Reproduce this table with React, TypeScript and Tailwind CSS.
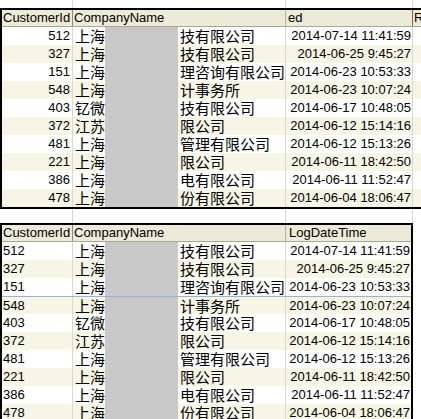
import React from "react";

const rows: [string, string, string, string][] = [
  ["512", "上海", "技有限公司", "2014-07-14 11:41:59"],
  ["327", "上海", "技有限公司", "2014-06-25 9:45:27"],
  ["151", "上海", "理咨询有限公司", "2014-06-23 10:53:33"],
  ["548", "上海", "计事务所", "2014-06-23 10:07:24"],
  ["403", "钇微", "技有限公司", "2014-06-17 10:48:05"],
  ["372", "江苏", "限公司", "2014-06-12 15:14:16"],
  ["481", "上海", "管理有限公司", "2014-06-12 15:13:26"],
  ["221", "上海", "限公司", "2014-06-11 18:42:50"],
  ["386", "上海", "电有限公司", "2014-06-11 11:52:47"],
  ["478", "上海", "份有限公司", "2014-06-04 18:06:47"],
];

const latin = { fontFamily: '"Liberation Sans", Arial, sans-serif' };
const cjk = { fontFamily: '"Noto Sans CJK SC", "Noto Sans", sans-serif' };

function GapLines({ h }: { h: string }) {
  return (
    <div className={`flex ${h} shrink-0`}>
      <div className="w-[73px] shrink-0 border-r border-[#d9d9d9]" />
      <div className="w-[213px] shrink-0 border-r border-[#d9d9d9]" />
      <div className="w-[127px] shrink-0 border-r border-[#d9d9d9]" />
    </div>
  );
}

function Table({ top }: { top: boolean }) {
  return (
    <div
      className={
        top
          ? "flex flex-col w-[440px] shrink-0 border-l-2 border-t-2 border-b-2 border-black"
          : "flex flex-col w-[413px] shrink-0 border-l-2 border-t-2 border-r-2 border-black"
      }
    >
      <div className="flex h-[17px] bg-[#ecead9] border-b border-[#a8a698] text-[13px] leading-[16px] text-black" style={latin}>
        <div className="w-[71px] shrink-0 border-r border-[#8c8a80] pl-[1px] overflow-hidden whitespace-nowrap">CustomerId</div>
        <div className="w-[213px] shrink-0 border-r border-[#b5b3a5] pl-[1px] overflow-hidden whitespace-nowrap">CompanyName</div>
        <div className={top ? "w-[127px] shrink-0 border-r border-[#6e6c64] pl-[2px] overflow-hidden whitespace-nowrap" : "w-[125px] shrink-0 pl-[3px] overflow-hidden whitespace-nowrap"}>
          {top ? "ed" : "LogDateTime"}
        </div>
        {top && <div className="flex-1 pl-[1px] overflow-hidden whitespace-nowrap">R</div>}
      </div>
      {rows.map((r, i) => {
        const bg = i % 2 === 1 ? "bg-[#f7f6e6]" : "bg-white";
        const blue = !top && i === 3 ? "border-t border-[#9fb3c8] h-[18px]" : "h-[18px]";
        return (
          <div key={i} className={`flex ${blue} ${bg} text-black`}>
            <div
              className={`w-[71px] shrink-0 border-r border-[#dcd9c8] text-[13px] leading-[18px] ${top ? "text-right pr-[2px]" : "text-left pl-[1px]"}`}
              style={latin}
            >
              {r[0]}
            </div>
            <div className="w-[213px] shrink-0 border-r border-[#dcd9c8] flex items-stretch overflow-hidden whitespace-nowrap text-[15px] leading-[18px]" style={cjk}>
              <span className="pl-[2px] w-[32px] shrink-0">{r[1]}</span>
              <div className="w-[73px] shrink-0 bg-[#c8c8c8]" />
              <span className="pl-[2px]">{r[2]}</span>
            </div>
            <div
              className={`${top ? "w-[127px] border-r border-[#dcd9c8]" : "w-[125px]"} shrink-0 text-right pr-[1px] text-[13px] leading-[18px] whitespace-nowrap`}
              style={latin}
            >
              {r[3]}
            </div>
            {top && <div className="flex-1" />}
          </div>
        );
      })}
    </div>
  );
}

export default function App() {
  return (
    <div className="w-[421px] h-[419px] overflow-hidden bg-white flex flex-col">
      <GapLines h="h-[8px]" />
      <Table top={true} />
      <GapLines h="h-[14px]" />
      <Table top={false} />
    </div>
  );
}
